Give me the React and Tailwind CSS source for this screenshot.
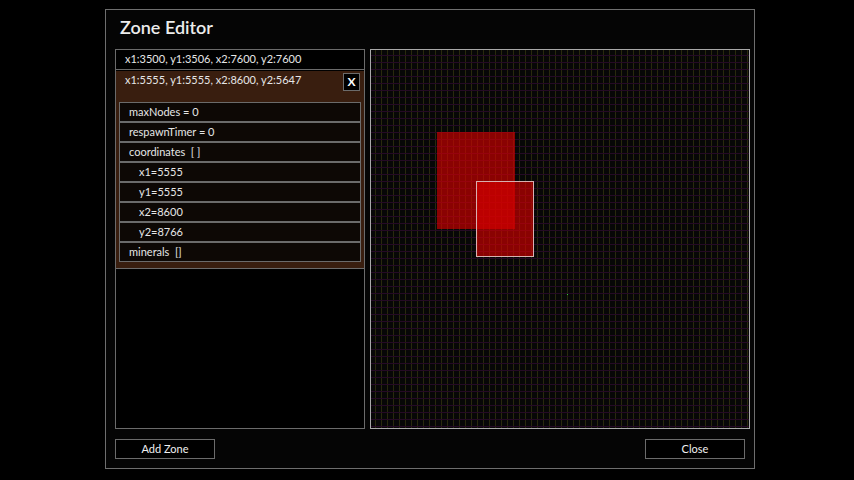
import React from "react";

const fields = [
  { label: "maxNodes = 0", indent: false },
  { label: "respawnTimer = 0", indent: false },
  { label: "coordinates  [ ]", indent: false },
  { label: "x1=5555", indent: true },
  { label: "y1=5555", indent: true },
  { label: "x2=8600", indent: true },
  { label: "y2=8766", indent: true },
  { label: "minerals  []", indent: false },
];

function ZoneMap() {
  return (
    <svg width="378" height="378" className="block" shapeRendering="crispEdges">
      <defs>
        <pattern id="gx" width="6" height="378" patternUnits="userSpaceOnUse">
          <rect x="4" y="0" width="1" height="378" fill="#29290d" />
        </pattern>
        <pattern id="gy" width="378" height="7" patternUnits="userSpaceOnUse">
          <rect x="0" y="5" width="378" height="1" fill="#250a25" />
        </pattern>
      </defs>
      <rect width="378" height="378" fill="#070707" />
      <rect width="378" height="378" fill="url(#gx)" />
      <rect width="378" height="378" fill="url(#gy)" />
      <rect x="66" y="82" width="78" height="97" fill="rgb(220,0,0)" fillOpacity="0.62" />
      <rect x="105.5" y="131.5" width="57" height="75" fill="rgb(220,0,0)" fillOpacity="0.62" stroke="#d8b0b0" strokeWidth="1" />
      <rect x="196" y="244" width="1" height="1" fill="#30d030" />
    </svg>
  );
}

export default function App() {
  return (
    <div className="w-[854px] h-[480px] bg-black pl-[105px] pt-[9px] font-['Lato',sans-serif] text-[#e6e6e6]">
      <div className="w-[650px] h-[460px] border border-[#6e6e6e] bg-[#050505] flex flex-col">
        <div className="h-[39px] flex items-center pl-[14px] pb-[4px] text-[18px] font-semibold text-[#ececec]">
          Zone Editor
        </div>
        <div className="flex pl-[9px] gap-[5px]">
          <div className="w-[250px] h-[380px] border border-[#6b6b6b] bg-black flex flex-col">
            <div className="h-[20px] border-b border-[#6b6b6b] flex items-center pl-[9px] text-[11px]">
              x1:3500, y1:3506, x2:7600, y2:7600
            </div>
            <div className="mt-[1px] bg-[#391e0f] border-b border-[#6b6b6b] pb-[6px]">
              <div className="h-[31px] flex items-start justify-between pl-[9px] pr-[4px] pt-[2px]">
                <span className="text-[11px] leading-[14px]">x1:5555, y1:5555, x2:8600, y2:5647</span>
                <span className="w-[17px] h-[18px] bg-black border border-[#6b6b6b] flex items-center justify-center text-[12px] font-bold text-white">
                  X
                </span>
              </div>
              <div className="mx-[3px] flex flex-col">
                {fields.map((f) => (
                  <div
                    key={f.label}
                    className={`h-[20px] border border-[#6b6b6b] bg-[#0d0805] flex items-center text-[11px] whitespace-pre ${f.indent ? "pl-[19px]" : "pl-[9px]"}`}
                  >
                    {f.label}
                  </div>
                ))}
              </div>
            </div>
          </div>
          <div className="w-[380px] h-[380px] border border-[#a8a8a8]">
            <ZoneMap />
          </div>
        </div>
        <div className="flex justify-between pl-[9px] pr-[9px] mt-[10px]">
          <button className="w-[100px] h-[20px] border border-[#6b6b6b] bg-black text-[11px] text-[#f0f0f0]">
            Add Zone
          </button>
          <button className="w-[100px] h-[20px] border border-[#6b6b6b] bg-black text-[11px] text-[#f0f0f0]">
            Close
          </button>
        </div>
      </div>
    </div>
  );
}
